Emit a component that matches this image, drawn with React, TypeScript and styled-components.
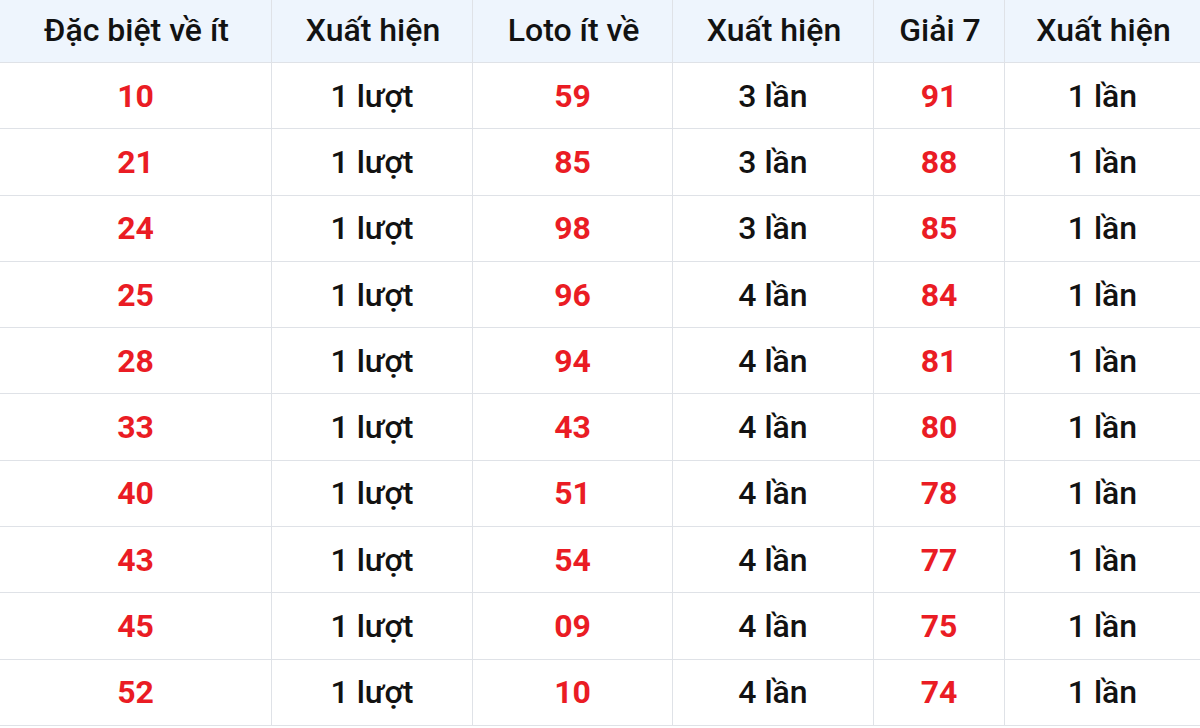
import styled, { createGlobalStyle } from "styled-components";

const GlobalStyle = createGlobalStyle`
    html, body {
        margin: 0;
        padding: 0;
        background: #ffffff;
    }
    body {
        font-family: Roboto, "Noto Sans", Arial, sans-serif;
    }
`;

const Grid = styled('div')`
    display: grid;
    width: 1200px;
    grid-template-columns: 272px 201px 200px 201px 131px 1fr;
    grid-template-rows: 63px repeat(10, 66.3px);
    color: #121212;
`;

const HeadCell = styled('div')`
    display: flex;
    align-items: center;
    justify-content: center;
    background: #eef5fd;
    border-right: 1px solid #dfe2e7;
    border-bottom: 1px solid #dfe2e7;
    font-size: 32px;
    font-weight: 500;
    padding-bottom: 3px;
    padding-left: 2px;
    &:nth-child(6) { border-right: none; }
`;

const Cell = styled('div')<{$red?:boolean; $last?:boolean}>`
    display: flex;
    align-items: center;
    justify-content: center;
    border-right: ${({$last}) => $last ? "none" : "1px solid #dfe2e7"};
    border-bottom: 1px solid #dfe2e7;
    font-size: 32px;
    font-weight: ${({$red}) => $red ? 700 : 500};
    color: ${({$red}) => $red ? "#ea1c24" : "#121212"};
`;

const columns = ["Đặc biệt về ít", "Xuất hiện", "Loto ít về", "Xuất hiện", "Giải 7", "Xuất hiện"];

const rows: string[][] = [
    ["10", "1 lượt", "59", "3 lần", "91", "1 lần"],
    ["21", "1 lượt", "85", "3 lần", "88", "1 lần"],
    ["24", "1 lượt", "98", "3 lần", "85", "1 lần"],
    ["25", "1 lượt", "96", "4 lần", "84", "1 lần"],
    ["28", "1 lượt", "94", "4 lần", "81", "1 lần"],
    ["33", "1 lượt", "43", "4 lần", "80", "1 lần"],
    ["40", "1 lượt", "51", "4 lần", "78", "1 lần"],
    ["43", "1 lượt", "54", "4 lần", "77", "1 lần"],
    ["45", "1 lượt", "09", "4 lần", "75", "1 lần"],
    ["52", "1 lượt", "10", "4 lần", "74", "1 lần"],
];

const App = () => {
    return (
        <>
            <GlobalStyle />
            <Grid>
                {columns.map((c, i) => (
                    <HeadCell key={"h" + i}>{c}</HeadCell>
                ))}
                {rows.map((r, i) =>
                    r.map((v, j) => (
                        <Cell key={i + "-" + j} $red={j % 2 === 0} $last={j === 5}>{v}</Cell>
                    ))
                )}
            </Grid>
        </>
    );
};

export default App;
